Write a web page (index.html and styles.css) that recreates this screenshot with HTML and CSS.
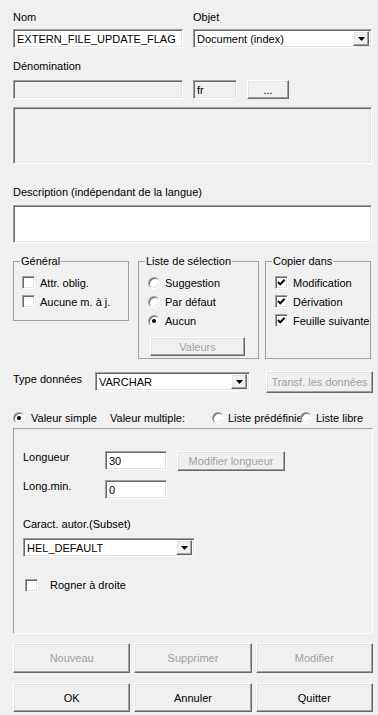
FILE: index.html
```html
<!DOCTYPE html>
<html lang="fr">
<head>
  <meta charset="UTF-8">
  <title>Attribut</title>
  <link rel="stylesheet" href="styles.css">
</head>
<body>
  <div class="dialog">
    <div class="row-top">
      <div class="col-name">
        <div class="lbl">Nom</div>
        <div class="edit sunken field-top">EXTERN_FILE_UPDATE_FLAG</div>
      </div>
      <div class="col-obj">
        <div class="lbl">Objet</div>
        <div class="combo sunken field-top">
          <span class="combo-text">Document (index)</span>
          <span class="combo-btn raised"><svg width="7" height="4" viewBox="0 0 7 4"><polygon points="0,0 7,0 3.5,4" fill="#000"/></svg></span>
        </div>
      </div>
    </div>

    <div class="lbl lbl-denom">Dénomination</div>
    <div class="row-denom">
      <div class="edit sunken readonly w-denom"></div>
      <div class="edit sunken readonly w-lang">fr</div>
      <div class="btn raised w-dots">...</div>
    </div>
    <div class="sunken readonly memo"></div>

    <div class="lbl lbl-desc">Description (indépendant de la langue)</div>
    <div class="edit sunken desc"></div>

    <div class="groups">
      <fieldset class="group group--general">
        <legend>Général</legend>
        <div class="opts opts--general">
          <div class="opt"><span class="check sunken"></span><span class="opt-text">Attr. oblig.</span></div>
          <div class="opt"><span class="check sunken"></span><span class="opt-text">Aucune m. à j.</span></div>
        </div>
      </fieldset>
      <fieldset class="group group--list">
        <legend>Liste de sélection</legend>
        <div class="opts">
          <div class="opt"><span class="radio"></span><span class="opt-text opt-text--radio">Suggestion</span></div>
          <div class="opt"><span class="radio"></span><span class="opt-text opt-text--radio">Par défaut</span></div>
          <div class="opt"><span class="radio"><span class="dot"></span></span><span class="opt-text opt-text--radio">Aucun</span></div>
          <div class="btn raised disabled btn-values">Valeurs</div>
        </div>
      </fieldset>
      <fieldset class="group group--copy">
        <legend>Copier dans</legend>
        <div class="opts">
          <div class="opt"><span class="check sunken"><svg width="11" height="11" viewBox="0 0 11 11"><polyline points="2,5 4.2,7.4 8.6,2.8" fill="none" stroke="#000" stroke-width="2"/></svg></span><span class="opt-text">Modification</span></div>
          <div class="opt"><span class="check sunken"><svg width="11" height="11" viewBox="0 0 11 11"><polyline points="2,5 4.2,7.4 8.6,2.8" fill="none" stroke="#000" stroke-width="2"/></svg></span><span class="opt-text">Dérivation</span></div>
          <div class="opt"><span class="check sunken"><svg width="11" height="11" viewBox="0 0 11 11"><polyline points="2,5 4.2,7.4 8.6,2.8" fill="none" stroke="#000" stroke-width="2"/></svg></span><span class="opt-text">Feuille suivante</span></div>
        </div>
      </fieldset>
    </div>

    <div class="type-row">
      <div class="lbl type-lbl">Type données</div>
      <div class="combo sunken type-combo">
        <span class="combo-text">VARCHAR</span>
        <span class="combo-btn raised"><svg width="7" height="4" viewBox="0 0 7 4"><polygon points="0,0 7,0 3.5,4" fill="#000"/></svg></span>
      </div>
      <div class="btn raised disabled btn-transf">Transf. les données</div>
    </div>

    <div class="mode-row">
      <div class="mode mode--simple"><span class="radio"><span class="dot"></span></span><span class="mode-text mode-text--first">Valeur simple</span></div>
      <div class="mode mode--label">Valeur multiple:</div>
      <div class="mode mode--predef"><span class="radio"></span><span class="mode-text">Liste prédéfinie</span></div>
      <div class="mode"><span class="radio"></span><span class="mode-text">Liste libre</span></div>
    </div>

    <div class="panel">
      <div class="len-row">
        <div class="lbl len-lbl">Longueur</div>
        <div class="edit sunken len-edit">30</div>
        <div class="btn raised disabled btn-len">Modifier longueur</div>
      </div>
      <div class="len-row len-row--min">
        <div class="lbl len-lbl">Long.min.</div>
        <div class="edit sunken len-edit">0</div>
      </div>
      <div class="lbl lbl-subset">Caract. autor.(Subset)</div>
      <div class="combo sunken subset-combo">
        <span class="combo-text">HEL_DEFAULT</span>
        <span class="combo-btn raised"><svg width="7" height="4" viewBox="0 0 7 4"><polygon points="0,0 7,0 3.5,4" fill="#000"/></svg></span>
      </div>
      <div class="trim-row">
        <span class="check sunken"></span>
        <span class="trim-text">Rogner à droite</span>
      </div>
    </div>

    <div class="actions">
      <div class="btn raised disabled act act--top">Nouveau</div>
      <div class="btn raised disabled act act--top">Supprimer</div>
      <div class="btn raised disabled act act--top">Modifier</div>
      <div class="btn raised act">OK</div>
      <div class="btn raised act">Annuler</div>
      <div class="btn raised act">Quitter</div>
    </div>
  </div>
</body>
</html>
```

FILE: styles.css
```css
* {
  box-sizing: border-box;
}

body {
  margin: 0;
  background: #f0f0f0;
  font: 11px "Liberation Sans", Arial, sans-serif;
  color: #000;
}

.dialog {
  width: 378px;
  height: 715px;
  padding: 11px 5px 0 13px;
  overflow: hidden;
}

.lbl {
  height: 13px;
  line-height: 13px;
  white-space: nowrap;
}

/* classic 3d borders */
.sunken {
  border: 1px solid;
  border-color: #a0a0a0 #fff #fff #a0a0a0;
  box-shadow: inset 1px 1px 0 #696969, inset -1px -1px 0 #e3e3e3;
}

.raised {
  border: 1px solid;
  border-color: #fff #696969 #696969 #fff;
  box-shadow: inset -1px -1px 0 #a0a0a0, inset 1px 1px 0 #e3e3e3;
  background: #f0f0f0;
}

.edit {
  height: 19px;
  padding: 0 3px;
  background: #fff;
  display: flex;
  align-items: center;
  white-space: nowrap;
  overflow: hidden;
}

.readonly {
  background: #f0f0f0;
}

.btn {
  display: flex;
  align-items: center;
  justify-content: center;
  white-space: nowrap;
}

.btn.disabled {
  color: #a0a0a0;
}

.combo {
  height: 19px;
  padding: 2px;
  background: #fff;
  display: flex;
  align-items: center;
}

.combo-text {
  flex: 1;
  padding-left: 1px;
  white-space: nowrap;
}

.combo-btn {
  width: 16px;
  height: 15px;
  display: flex;
  align-items: center;
  justify-content: center;
}

/* top block */
.row-top {
  display: flex;
  gap: 10px;
}

.col-name {
  width: 170px;
}

.col-obj {
  width: 179px;
}

.field-top {
  margin-top: 5px;
}

.lbl-denom {
  margin-top: 12px;
}

.row-denom {
  display: flex;
  margin-top: 7px;
}

.w-denom {
  width: 170px;
}

.w-lang {
  width: 44px;
  margin-left: 10px;
}

.w-dots {
  width: 42px;
  height: 19px;
  margin-left: 10px;
}

.memo {
  width: 359px;
  height: 57px;
  margin-top: 8px;
}

.lbl-desc {
  margin-top: 22px;
}

.desc {
  width: 359px;
  height: 38px;
  margin-top: 6px;
}

/* group boxes */
.groups {
  display: flex;
  align-items: flex-start;
  margin-top: 12px;
}

.group {
  margin: 0;
  padding: 0;
  border: 1px solid #a0a0a0;
  min-width: 0;
}

.group legend {
  margin-left: 6px;
  padding: 0 1px;
  line-height: 13px;
}

.group--general {
  width: 116px;
  height: 66px;
}

.group--list {
  width: 121px;
  height: 104px;
  margin-left: 9px;
}

.group--copy {
  width: 106px;
  height: 104px;
  margin-left: 6px;
  overflow: hidden;
}

.opts {
  padding: 5px 0 0 9px;
}

.opts--general {
  padding-left: 8px;
}

.opt {
  height: 19px;
  display: flex;
  align-items: center;
  white-space: nowrap;
}

.opt-text {
  margin-left: 5px;
}

.opt-text--radio {
  margin-left: 5px;
}

.check {
  width: 13px;
  height: 13px;
  flex: none;
  background: #fff;
  display: flex;
}

.radio {
  width: 12px;
  height: 12px;
  flex: none;
  border-radius: 50%;
  background: #fff;
  border: 1px solid;
  border-color: #a0a0a0 #fff #fff #a0a0a0;
  box-shadow: inset 1px 1px 0 #696969, inset -1px -1px 0 #e3e3e3;
  display: flex;
  align-items: center;
  justify-content: center;
}

.dot {
  width: 4px;
  height: 4px;
  border-radius: 50%;
  background: #000;
}

.btn-values {
  width: 95px;
  height: 19px;
  margin: 7px 0 0 2px;
}

/* data type */
.type-row {
  display: flex;
  align-items: flex-start;
  height: 22px;
  margin-top: 12px;
}

.type-lbl {
  width: 82px;
  margin-top: 2px;
}

.type-combo {
  width: 155px;
  margin-top: 1px;
}

.btn-transf {
  width: 107px;
  height: 22px;
  margin-left: 16px;
}

.mode-row {
  display: flex;
  height: 19px;
  margin-top: 15px;
}

.mode {
  display: flex;
  align-items: center;
  white-space: nowrap;
}

.mode--simple {
  width: 97px;
}

.mode--label {
  width: 102px;
}

.mode--predef {
  width: 88px;
}

.mode-text {
  margin-left: 4px;
}

.mode-text--first {
  margin-left: 6px;
}

/* value panel */
.panel {
  width: 360px;
  height: 206px;
  margin-top: 1px;
  padding: 22px 0 0 9px;
  border: 1px solid;
  border-color: #a0a0a0 #fff #fff #a0a0a0;
}

.len-row {
  display: flex;
  align-items: flex-start;
  height: 20px;
}

.len-row--min {
  height: 19px;
  margin-top: 9px;
}

.len-lbl {
  width: 82px;
}

.len-edit {
  width: 62px;
}

.btn-len {
  width: 108px;
  height: 20px;
  margin-left: 10px;
}

.lbl-subset {
  margin-top: 19px;
}

.subset-combo {
  width: 172px;
  margin-top: 7px;
}

.trim-row {
  display: flex;
  align-items: center;
  height: 16px;
  margin-top: 20px;
  padding-left: 2px;
}

.trim-text {
  margin-left: 12px;
}

/* bottom buttons */
.actions {
  display: grid;
  grid-template-columns: repeat(3, 1fr);
  grid-template-rows: 30px 29px;
  column-gap: 4px;
  row-gap: 10px;
  width: 360px;
  margin-top: 9px;
}
```
